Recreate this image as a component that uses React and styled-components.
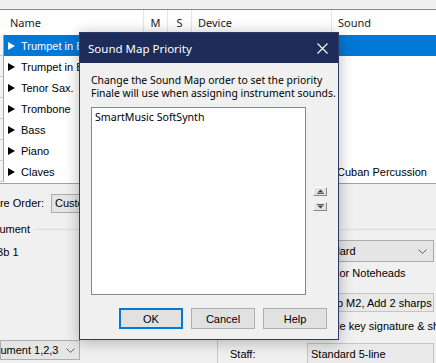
import React from 'react'
import styled, { createGlobalStyle } from 'styled-components'

const GlobalStyle = createGlobalStyle`
  html, body {
    margin: 0;
    padding: 0;
    background: #f0f0f0;
    overflow: hidden;
  }
`

const Screen = styled.div`
  position: relative;
  width: 436px;
  height: 363px;
  overflow: hidden;
  background: #f0f0f0;
  font-family: "Liberation Sans", Arial, sans-serif;
  font-size: 11px;
  color: #000;
`

const TopGap = styled.div`
  height: 9px;
`

const ListView = styled.div`
  height: 173px;
  border-top: 1px solid #828790;
  border-bottom: 1px solid #a0a0a0;
  background: #fff;
  overflow: hidden;
`

const HeaderRow = styled.div`
  display: flex;
  height: 25px;
  font-family: "Noto Sans", sans-serif;
  font-size: 11px;
  color: #1a1a1a;
`

const HeaderCell = styled.div`
  box-sizing: border-box;
  flex: ${p => (p.$w ? `0 0 ${p.$w}px` : '1')};
  display: flex;
  align-items: center;
  justify-content: ${p => (p.$center ? 'center' : 'flex-start')};
  padding-left: ${p => (p.$center ? 0 : 6)}px;
  border-right: ${p => (p.$w ? '1px solid #e5e5e5' : 'none')};
  white-space: nowrap;
`

const Row = styled.div`
  display: flex;
  height: 21px;
`

const Strip = styled.div`
  box-sizing: border-box;
  flex: 0 0 ${p => p.$w}px;
  background: #f4f4f4;
  border-right: 1px solid #a0a0a0;
  border-bottom: 1px solid #c8c8c8;
`

const HeadStrip = styled.div`
  flex: 0 0 4px;
`

const Cell = styled.div`
  box-sizing: border-box;
  flex: ${p => (p.$w ? `0 0 ${p.$w}px` : '1')};
  display: flex;
  align-items: center;
  padding-left: ${p => p.$pad || 0}px;
  white-space: nowrap;
  overflow: hidden;
  background: ${p => (p.$selected ? '#0078d7' : 'transparent')};
  color: ${p => (p.$selected ? '#fff' : '#000')};
`

const Expander = styled.span`
  display: inline-block;
  width: 0;
  height: 0;
  border-top: 4px solid transparent;
  border-bottom: 4px solid transparent;
  border-left: 7px solid currentColor;
  margin-right: 6px;
`

const Lower = styled.div`
  display: flex;
`

const LeftPane = styled.div`
  flex: 0 0 217px;
  min-width: 0;
  display: flex;
  flex-direction: column;
  padding-top: 9px;
`

const OrderRow = styled.div`
  display: flex;
  align-items: center;
  height: 20px;
  white-space: nowrap;
`

const Cut = styled.span`
  margin-left: ${p => -p.$cut}px;
  white-space: nowrap;
`

const Combo = styled.div`
  box-sizing: border-box;
  flex: 0 0 auto;
  display: flex;
  align-items: center;
  justify-content: space-between;
  width: ${p => p.$w}px;
  height: ${p => p.$h || 20}px;
  margin-left: ${p => p.$ml || 0}px;
  margin-top: ${p => p.$mt || 0}px;
  padding: 0 ${p => p.$pr || 6}px 0 ${p => p.$pl || 3}px;
  background: #e5e5e5;
  border: 1px solid #adadad;
  overflow: hidden;
  white-space: nowrap;
`

const Chevron = () => (
  <svg width="9" height="5" viewBox="0 0 9 5">
    <polyline points="0.5,0.5 4.5,4.5 8.5,0.5" fill="none" stroke="#606060" strokeWidth="1" />
  </svg>
)

const GroupLabel = styled.div`
  display: flex;
  align-items: center;
  height: 14px;
  margin-top: 9px;
  white-space: nowrap;

  &::after {
    content: '';
    flex: 1;
    margin: 1px 0 0 4px;
    border-top: 1px solid #dcdcdc;
  }
`

const PlainLine = styled.div`
  height: 14px;
  line-height: 14px;
  margin-top: ${p => p.$mt}px;
  white-space: nowrap;
`

const RightPane = styled.div`
  flex: 1;
  min-width: 0;
  padding-top: 45px;
`

const GroupBox = styled.div`
  border-top: 1px solid #dcdcdc;
  border-left: 1px solid #c8c8c8;
  padding-left: 12px;
  display: grid;
  grid-template-columns: 77px 127px;
  align-items: center;
`

const FieldLabel = styled.div`
  margin-top: ${p => p.$mt}px;
  white-space: nowrap;
`

const Field = styled.div`
  box-sizing: border-box;
  display: flex;
  align-items: center;
  justify-content: space-between;
  height: ${p => p.$h}px;
  margin-top: ${p => p.$mt}px;
  padding: 0 6px 0 ${p => p.$pl || 3}px;
  background: ${p => (p.$combo ? '#e5e5e5' : '#e9e9e9')};
  border: 1px solid ${p => (p.$combo ? '#adadad' : '#c4c4c4')};
  white-space: nowrap;
  overflow: hidden;
`

const CheckRow = styled.label`
  grid-column: 2;
  display: flex;
  align-items: center;
  gap: 3px;
  height: 14px;
  margin-top: ${p => p.$mt}px;
  white-space: nowrap;
`

const Box = styled.span`
  box-sizing: border-box;
  flex: 0 0 13px;
  height: 13px;
  background: #fff;
  border: 1px solid #333;
`

/* dialog */

const Dialog = styled.div`
  position: absolute;
  left: 79px;
  top: 32px;
  width: 260px;
  height: 308px;
  box-sizing: border-box;
  display: flex;
  flex-direction: column;
  background: #f0f0f0;
  border: 1px solid #2c3a66;
  box-shadow: 0 2px 14px rgba(0, 0, 0, 0.28);
  font-family: "Noto Sans", sans-serif;
  font-size: 11px;
`

const TitleBar = styled.div`
  display: flex;
  align-items: center;
  justify-content: space-between;
  height: 30px;
  padding-left: 8px;
  background: #1e2c5a;
  color: #fff;
  font-size: 11.5px;
`

const CloseBtn = styled.div`
  width: 32px;
  height: 30px;
  display: flex;
  align-items: center;
  justify-content: center;
`

const Body = styled.div`
  flex: 1;
  display: flex;
  flex-direction: column;
  padding: 11px 11px 10px 11px;
`

const Prompt = styled.p`
  margin: 0;
  font-size: 10.4px;
  line-height: 13px;
  white-space: nowrap;
  color: #000;
`

const ListArea = styled.div`
  display: flex;
  gap: 7px;
  margin-top: 7px;
`

const ListBox = styled.div`
  box-sizing: border-box;
  width: 216px;
  height: 188px;
  background: #fff;
  border: 1px solid #828790;
  padding: 2px 3px;
  line-height: 14px;
  font-size: 10.6px;
`

const Movers = styled.div`
  display: flex;
  flex-direction: column;
  justify-content: center;
  gap: 6px;
  margin-top: -5px;
`

const MoveBtn = styled.div`
  box-sizing: border-box;
  width: 14px;
  height: 9px;
  display: flex;
  align-items: center;
  justify-content: center;
  background: #e3e3e3;
  border: 1px solid;
  border-color: #ffffff #8a8a8a #8a8a8a #ffffff;
`

const Buttons = styled.div`
  display: flex;
  justify-content: flex-end;
  gap: 8px;
  margin-top: 13px;
`

const Button = styled.div`
  box-sizing: border-box;
  width: 64px;
  height: 21px;
  display: flex;
  align-items: center;
  justify-content: center;
  background: #e1e1e1;
  border: ${p => (p.$default ? '2px solid #0078d7' : '1px solid #adadad')};
  font-family: "Liberation Sans", Arial, sans-serif;
  font-size: 11px;
`

const rows = [
  { name: 'Trumpet in Bb 1', selected: true },
  { name: 'Trumpet in Bb 2' },
  { name: 'Tenor Sax.' },
  { name: 'Trombone' },
  { name: 'Bass' },
  { name: 'Piano' },
  { name: 'Claves', sound: 'Cuban Percussion' },
]

export default function App() {
  return (
    <Screen>
      <GlobalStyle />
      <TopGap />
      <ListView>
        <HeaderRow>
          <HeadStrip />
          <HeaderCell $w={140}>Name</HeaderCell>
          <HeaderCell $w={24} $center>M</HeaderCell>
          <HeaderCell $w={24} $center>S</HeaderCell>
          <HeaderCell $w={140}>Device</HeaderCell>
          <HeaderCell>Sound</HeaderCell>
        </HeaderRow>
        {rows.map(r => (
          <Row key={r.name}>
            <Strip $w={4} />
            <Cell $w={140} $pad={4} $selected={r.selected}>
              <Expander />
              {r.name}
            </Cell>
            <Cell $w={24} $selected={r.selected} />
            <Cell $w={24} $selected={r.selected} />
            <Cell $w={140} $selected={r.selected} />
            <Cell $pad={5} $selected={r.selected}>{r.sound}</Cell>
          </Row>
        ))}
      </ListView>

      <Lower>
        <LeftPane>
          <OrderRow>
            <Cut $cut={19}>Score Order:</Cut>
            <Combo $w={150} $ml={7} $h={19}>Custom</Combo>
          </OrderRow>
          <GroupLabel>
            <Cut $cut={22}>Instrument</Cut>
          </GroupLabel>
          <PlainLine $mt={9}>
            <Cut $cut={4}>Bb 1</Cut>
          </PlainLine>
          <Combo $w={80} $h={20} $pl={0} $pr={4} $mt={81}>
            <Cut $cut={25}>Instrument 1,2,3</Cut>
            <Chevron />
          </Combo>
        </LeftPane>

        <RightPane>
          <GroupBox>
            <FieldLabel $mt={10}>Notation Style:</FieldLabel>
            <Field $combo $h={22} $mt={10}>
              Standard
              <Chevron />
            </Field>
            <CheckRow $mt={4}>
              <Box />
              Color Noteheads
            </CheckRow>
            <FieldLabel $mt={13}>Transposition:</FieldLabel>
            <Field $h={19} $mt={13} $pl={21}>Up M2, Add 2 sharps</Field>
            <CheckRow $mt={7}>
              <Box />
              Hide key signature &amp; show all accidentals
            </CheckRow>
            <FieldLabel $mt={10}>Staff:</FieldLabel>
            <Field $h={21} $mt={10}>Standard 5-line</Field>
          </GroupBox>
        </RightPane>
      </Lower>

      <Dialog>
        <TitleBar>
          Sound Map Priority
          <CloseBtn>
            <svg width="11" height="11" viewBox="0 0 11 11">
              <path d="M0.5 0.5 L10.5 10.5 M10.5 0.5 L0.5 10.5" stroke="#fff" strokeWidth="1.1" />
            </svg>
          </CloseBtn>
        </TitleBar>
        <Body>
          <Prompt>
            Change the Sound Map order to set the priority
            <br />
            Finale will use when assigning instrument sounds.
          </Prompt>
          <ListArea>
            <ListBox>SmartMusic SoftSynth</ListBox>
            <Movers>
              <MoveBtn>
                <svg width="7" height="5" viewBox="0 0 7 5">
                  <path d="M3.5 0.5 L6.5 3.5 L0.5 3.5 Z" fill="#444" />
                  <line x1="0" y1="4.5" x2="7" y2="4.5" stroke="#666" strokeWidth="1" />
                </svg>
              </MoveBtn>
              <MoveBtn>
                <svg width="7" height="5" viewBox="0 0 7 5">
                  <line x1="0" y1="0.5" x2="7" y2="0.5" stroke="#666" strokeWidth="1" />
                  <path d="M0.5 1.5 L6.5 1.5 L3.5 4.5 Z" fill="#444" />
                </svg>
              </MoveBtn>
            </Movers>
          </ListArea>
          <Buttons>
            <Button $default>OK</Button>
            <Button>Cancel</Button>
            <Button>Help</Button>
          </Buttons>
        </Body>
      </Dialog>
    </Screen>
  )
}
